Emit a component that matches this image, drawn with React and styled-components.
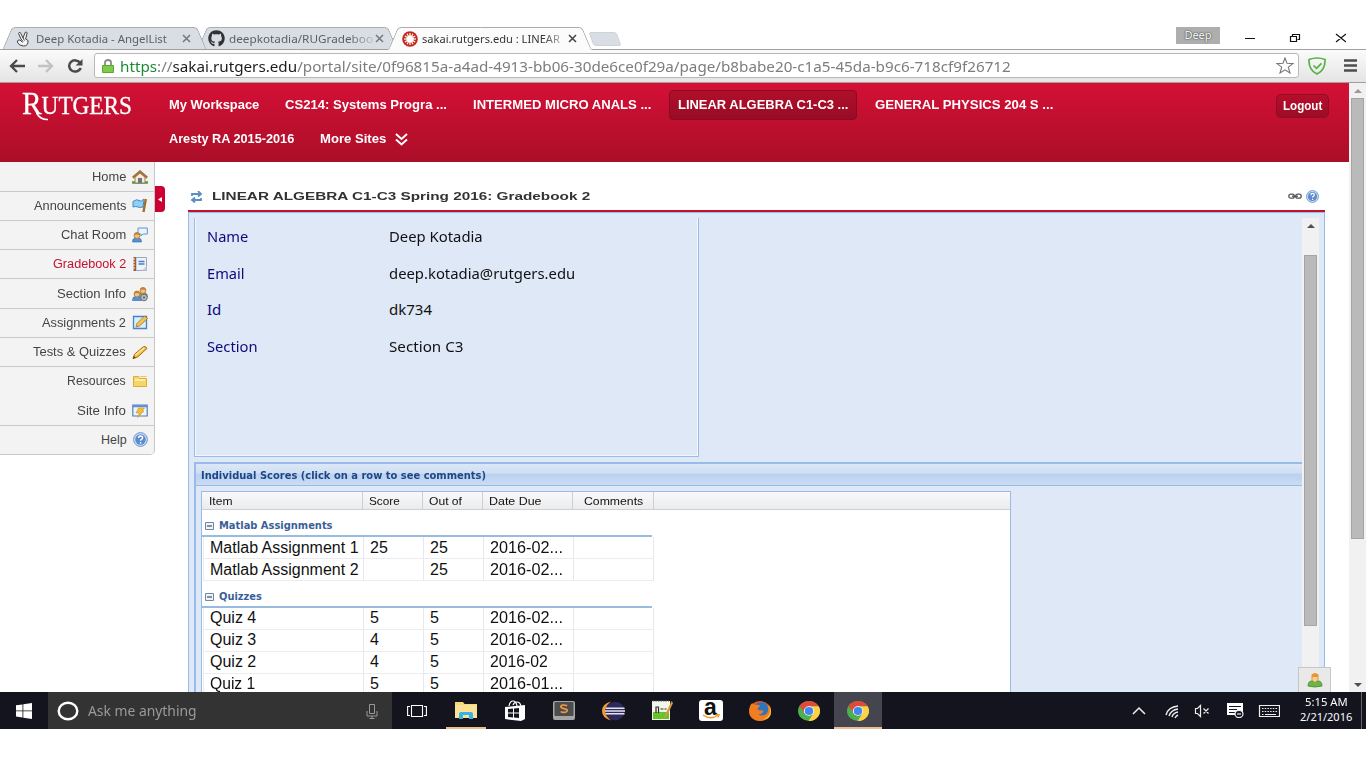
import React, { useLayoutEffect, useRef, useState } from "react";
import styled, { createGlobalStyle, css } from "styled-components";
import { FaGithub } from "react-icons/fa";

const arial = `"Liberation Sans", Arial, sans-serif`;
const segoe = `"Noto Sans", "Open Sans", sans-serif`;
const tahoma = `"DejaVu Sans Condensed", "DejaVu Sans", sans-serif`;

const GlobalStyle = createGlobalStyle`
  * { box-sizing: border-box; }
  body { margin: 0; background: #fff; font-family: ${arial}; }
  svg { display: block; flex: none; }
`;

/* One line of text whose glyphs are scaled to an exact width */
const FitBox = styled.span`
  display: inline-block;
  flex: none;
  white-space: nowrap;
  text-align: left;
`;
const FitInner = styled.span`
  display: inline-block;
  transform-origin: 0 50%;
`;
function Fit({ w, children }) {
  const ref = useRef(null);
  const [scale, setScale] = useState(1);
  useLayoutEffect(() => {
    setScale(w / ref.current.offsetWidth);
  }, [w]);
  return (
    <FitBox style={{ width: w }}>
      <FitInner ref={ref} style={{ transform: `scaleX(${scale})` }}>{children}</FitInner>
    </FitBox>
  );
}

const Screen = styled.div`
  width: 1366px;
  height: 768px;
  padding-top: 27px;
  display: flex;
  flex-direction: column;
  overflow: hidden;
  background: #fff;
`;

/* ---------- Browser tabs ---------- */
const TabStrip = styled.div`
  display: flex;
  height: 23px;
  flex: none;
  padding-left: 7px;
  margin-bottom: -1px;
  position: relative;
  z-index: 2;
`;
const edge = css`
  content: "";
  position: absolute;
  top: 0;
  bottom: 0;
  width: 52%;
  z-index: -1;
  background: ${(p) => (p.$active ? "#fbfbfb" : "#d9dde4")};
  border-top: 1px solid #a9acb0;
  border-bottom: 1px solid ${(p) => (p.$active ? "#fbfbfb" : "#a0a0a0")};
`;
const Tab = styled.div`
  position: relative;
  z-index: ${(p) => p.$z};
  width: ${(p) => p.$w}px;
  padding-left: ${(p) => p.$pad || 9}px;
  display: flex;
  align-items: center;
  font: 11.5px ${segoe};
  line-height: 22px;
  color: ${(p) => (p.$active ? "#333" : "#5d5f63")};
  &::before { ${edge} left: 0; border-left: 1px solid #a0a2a5; border-top-left-radius: 4px; transform: skewX(-23deg); }
  &::after { ${edge} right: 0; border-right: 1px solid #a0a2a5; border-top-right-radius: 4px; transform: skewX(23deg); }
`;
const TabTitle = styled.span`
  margin-left: ${(p) => (p.$fade ? 4 : 6)}px;
  flex: 1;
  overflow: hidden;
  height: 22px;
  mask-image: ${(p) => (p.$fade ? "linear-gradient(90deg, #000 82%, transparent 103%)" : "none")};
`;
const TabClose = styled.span`
  width: 9px;
  margin-right: ${(p) => p.$r || 10}px;
`;
const NewTab = styled.div`
  width: 28px;
  height: 14px;
  margin: 5px 0 0 4px;
  background: #d9dde4;
  border: 1px solid #cfd2d8;
  border-radius: 3px;
  transform: skewX(20deg);
`;
const WindowControls = styled.div`
  display: flex;
  margin-left: auto;
  padding-right: 20px;
  align-items: flex-start;
`;
const ProfileBadge = styled.span`
  width: 44px;
  height: 17px;
  background: #aeaeae;
  color: #fff;
  font: 11px/16px ${segoe};
  text-align: center;
  text-shadow: 0 0 1px #333, 0 0 2px #444;
`;

/* ---------- Toolbar ---------- */
const Toolbar = styled.div`
  display: flex;
  align-items: center;
  flex: none;
  height: 34px;
  border-top: 1px solid #a0a0a0;
  border-bottom: 1px solid #a59a9c;
  background: linear-gradient(#fbfbfb, #e4e4e4);
  padding: 0 9px 1px;
  gap: 13px;
`;
const Omnibox = styled.div`
  display: flex;
  align-items: center;
  width: 1205px;
  height: 25px;
  margin-left: -2px;
  padding: 0 4px 0 7px;
  background: #fff;
  border: 1px solid #b8b8b8;
  border-radius: 3px;
  font: 15px/22px ${segoe};
  color: #7d7d7d;
  gap: 6px;
  & > svg:last-child { margin-left: auto; }
`;
const Secure = styled.span`color: #1b8a32;`;
const Host = styled.span`color: #1c1c1c;`;
const Shield = styled.svg`margin-left: -4px;`;
const Menu = styled.svg`margin-left: 5px;`;

/* ---------- Viewport ---------- */
const Viewport = styled.div`
  display: flex;
  flex: none;
  height: 609px;
  overflow: hidden;
`;
const Page = styled.div`
  position: relative;
  width: 1349px;
  display: flex;
  flex-direction: column;
`;
const Scroll = styled.div`
  width: 17px;
  flex: none;
  display: flex;
  flex-direction: column;
  align-items: center;
  background: #f1f1f1;
  padding: 6px 0 5px;
`;
const Thumb = styled.div`
  width: 13px;
  height: ${(p) => p.$h}px;
  background: #bababa;
  border: 1px solid #a5a5a5;
  margin: ${(p) => p.$gap}px 0 auto;
`;

const Banner = styled.header`
  display: flex;
  flex: none;
  height: 79px;
  padding: 0 20px 0 22px;
  background: linear-gradient(#d41035, #ab0e28);
  color: #fff;
`;
const Logo = styled.div`
  position: relative;
  width: 122px;
  height: 40px;
  padding-top: 3px;
  font: 24.5px/40px "Liberation Serif", serif;
  -webkit-text-stroke: 0.3px #fff;
`;
const LogoCap = styled.span`
  font-size: 31px;
  line-height: 30px;
`;
const Swash = styled.svg`
  position: absolute;
  left: 14px;
  top: 29px;
`;
const Nav = styled.nav`
  display: flex;
  flex-direction: column;
  flex: 1;
  padding-top: 7px;
`;
const NavRow = styled.div`
  display: flex;
  height: 30px;
  margin-bottom: 4px;
`;
const Site = styled.span`
  display: flex;
  align-items: center;
  gap: 9px;
  padding: 0 8px;
  margin-left: ${(p) => p.$gap}px;
  font: bold 12.5px/28px ${arial};
  border: 1px solid ${(p) => (p.$on ? "#8a0a22" : "transparent")};
  border-radius: 4px;
  background: ${(p) => (p.$on ? "linear-gradient(#b10e2b, #980c25)" : "none")};
`;
const Logout = styled.span`
  width: 53px;
  height: 24px;
  margin-top: 11px;
  border: 1px solid #930b24;
  border-radius: 5px;
  background: linear-gradient(#b60e2c, #9c0c26);
  font: bold 12.5px/23px ${arial};
  text-align: center;
`;

const Body = styled.div`
  display: flex;
  flex: 1;
  min-height: 0;
`;
const Side = styled.aside`
  width: 155px;
  height: 293px;
  padding-top: 0.4px;
  border-right: 1px solid #c6c6c6;
  border-bottom-right-radius: 5px;
  background: #f3f3f3;
  overflow: hidden;
`;
const SideItem = styled.div`
  height: 29.25px;
  display: flex;
  justify-content: flex-end;
  align-items: center;
  gap: 6px;
  padding-right: 6px;
  border-bottom: 1px solid ${(p) => (p.$open ? "transparent" : "#c9c9c9")};
  font: 12.5px/28px ${arial};
  color: ${(p) => (p.$on ? "#c8102e" : "#444")};
`;
const Handle = styled.div`
  width: 10px;
  height: 26px;
  margin-top: 24px;
  display: flex;
  align-items: center;
  justify-content: center;
  background: #cc0033;
  border-radius: 0 4px 4px 0;
`;

const Portlet = styled.main`
  width: 1137px;
  margin-left: 23px;
  display: flex;
  flex-direction: column;
`;
const PortletTitle = styled.div`
  height: 50px;
  flex: none;
  display: flex;
  align-items: flex-end;
  padding: 0 6px 7px 2px;
  border-bottom: 2px solid #c0122f;
  font: bold 11.5px/13px ${arial};
  color: #333;
  gap: 9px;
  & > svg:nth-of-type(2) { margin: 0 -5px 3px auto; }
`;
const Frame = styled.section`
  flex: 1;
  min-height: 0;
  display: flex;
  padding: 5px 5px 0 5px;
  border: solid #99bbe8;
  border-width: 1px 1px 0;
  background: #dfe8f6;
`;
const Content = styled.div`
  flex: 1;
  min-width: 0;
  display: flex;
  flex-direction: column;
`;
const Info = styled.div`
  width: 505px;
  height: 239px;
  flex: none;
  padding: 0 0 0 12px;
  border: solid #99bbe8;
  border-width: 0 1px 1px;
  box-shadow: inset 1px 0 #f4f8fd, inset -1px -1px #f4f8fd;
`;
const InfoRow = styled.div`
  display: flex;
  height: 36.5px;
  align-items: center;
  font: 15px/20px ${segoe};
  color: #111;
`;
const InfoLabel = styled.span`
  width: 182px;
  color: #0a0a7c;
`;
const Scores = styled.div`
  flex: 1;
  min-height: 0;
  margin-top: 5px;
  border-top: 2px solid #99bbe8;
  border-left: 2px solid #99bbe8;
`;
const ScoresTitle = styled.div`
  height: 22px;
  padding-left: 5px;
  border-bottom: 1px solid #99bbe8;
  background: linear-gradient(#dce8f6 0, #cddef3 45%, #b9d0ee 46%, #cbdcf3 100%);
  font: bold 11px/24px ${tahoma};
  color: #1f4687;
`;
const Grid = styled.div`
  width: 810px;
  height: 210px;
  margin: 5px 0 0 5px;
  border: 1px solid #99bbe8;
  background: #fff;
`;
const GridHead = styled.div`
  display: flex;
  height: 18px;
  padding-left: 1px;
  background: linear-gradient(#f9f9f9, #ebecee);
  border-bottom: 1px solid #d0d0d0;
  font: 11px/18px ${arial};
  color: #111;
`;
const HeadCell = styled.span`
  width: ${(p) => p.$w}px;
  padding-left: ${(p) => p.$pad || 6}px;
  border-right: 1px solid #cfcfd2;
`;
const Group = styled.div`
  display: flex;
  align-items: flex-end;
  height: 27px;
  width: 450px;
  padding: 0 0 2px 3px;
  gap: 5px;
  border-bottom: 2px solid #99bbe0;
  font: bold 11px/14px ${tahoma};
  color: #3a5f98;
  & > svg { margin-bottom: 3px; }
`;
const Row = styled.div`
  display: flex;
  height: 22px;
  width: 451px;
  margin-left: 1px;
  border: solid #ececf0;
  border-width: 0 0 1px 1px;
  font: 16px/${(p) => p.$lh}px ${arial};
  color: #111;
`;
const Cell = styled.span`
  width: ${(p) => p.$w}px;
  flex: none;
  padding-left: 6px;
  border-right: 1px solid #e6e8f0;
  overflow: hidden;
`;
const Presence = styled.div`
  position: absolute;
  right: 18px;
  bottom: 0;
  width: 33px;
  height: 25px;
  display: flex;
  justify-content: center;
  padding-top: 5px;
  border: 1px solid #c6c6c6;
  border-bottom: 0;
  background: #e9e9e9;
`;

/* ---------- Taskbar ---------- */
const Taskbar = styled.footer`
  display: flex;
  flex: none;
  height: 37px;
  background: #14141f;
  color: #fff;
`;
const Start = styled.div`
  width: 48px;
  display: grid;
  place-items: center;
`;
const Search = styled.div`
  width: 344px;
  display: flex;
  align-items: center;
  padding: 0 14px 0 9px;
  gap: 9px;
  background: #333;
  color: #9a9a9a;
  font: 14px/37px ${segoe};
  & > svg:last-child { margin-left: auto; }
`;
const TaskButton = styled.div`
  width: ${(p) => p.$w || 49}px;
  display: grid;
  place-items: center;
  background: ${(p) => (p.$on ? "#45454f" : "none")};
`;
const TaskInner = styled.div`
  width: ${(p) => p.$line}px;
  height: 37px;
  display: grid;
  place-items: center;
  border-top: 2px solid transparent;
  border-bottom: 2px solid #e9bd92;
`;
const Tray = styled.div`
  display: flex;
  align-items: center;
  margin-left: auto;
  padding-right: 4px;
`;
const Clock = styled.div`
  display: flex;
  flex-direction: column;
  align-items: center;
  width: 70px;
  margin-left: 11px;
  padding-bottom: 3px;
  font: 11px/15px ${segoe};
`;
const ShowDesktop = styled.i`
  width: 1px;
  height: 37px;
  background: #666;
`;

/* ---------- Drawings ---------- */
const CloseX = ({ c }) => (
  <svg width="9" height="9" viewBox="0 0 9 9" stroke={c} strokeWidth="1.5"><path d="M1 1l7 7M8 1L1 8" /></svg>
);
const Peace = () => (
  <svg width="14" height="16" viewBox="0 0 14 16" fill="#f4f4f4" stroke="#444" strokeWidth="1" strokeLinejoin="round">
    <path d="M5 8L2.500 2.500Q3 .8 4.400 1.600L7 7 9.200 1.300Q11 .6 11.200 2L9.600 8 12 9.500Q12.500 15 7.500 15 3 15 1.200 11L2 9.200 4 9 6.500 11.400M5 8l2.200 2.700M7 7l1.500 2.500" />
  </svg>
);
const RutgersDot = () => (
  <svg width="16" height="16" viewBox="0 0 16 16">
    <circle cx="8" cy="8" r="7.800" fill="#c2281d" />
    <g stroke="#fff" strokeWidth="1.200">
      {[0, 30, 60, 90, 120, 150].map((a) => <path key={a} d="M8 2v12" transform={`rotate(${a} 8 8)`} />)}
    </g>
    <circle cx="8" cy="8" r="3.500" fill="#fff" />
  </svg>
);
const House = () => (
  <svg width="16" height="14" viewBox="0 0 16 14">
    <path d="M0 12.500h16" stroke="#5a9b3c" strokeWidth="2.600" />
    <path d="M3 7l5-4 5 4v6H3z" fill="#f3ead8" stroke="#8a6a48" strokeWidth=".8" />
    <path d="M.8 7.800L8 1.600l7.200 6.200" fill="none" stroke="#a0753f" strokeWidth="2.600" />
    <path d="M6 8h4v5H6z" fill="#6a7786" />
  </svg>
);
const Flag = () => (
  <svg width="16" height="15" viewBox="0 0 16 15">
    <path d="M1 3.500q4-3 6-1t5-1.500l-1 8q-3 1-5 0t-5 0z" fill="#8fd0f5" stroke="#4389c2" />
    <path d="M13.800 1L11.500 14" stroke="#a0712c" strokeWidth="2.400" />
  </svg>
);
const Person = ({ x = 0, y = 0, hair = "#c27f35", body = "#4f94d8" }) => (
  <g transform={`translate(${x} ${y})`}>
    <path d="M0 10q0-4 3-4h3q3 0 3 4z" fill={body} stroke="#2e67a8" strokeWidth=".6" />
    <circle cx="4.500" cy="3.600" r="2.900" fill="#f0c08c" stroke={hair} strokeWidth="1" />
    <path d="M1.600 3.300q0-3 2.900-3t2.900 3q-3-1.600-5.800 0z" fill={hair} />
  </g>
);
const Chat = () => (
  <svg width="16" height="16" viewBox="0 0 16 16">
    <path d="M6 1h9.300v6H11L9 9V7H6z" fill="#eaf4fd" stroke="#5d97cf" />
    <Person x={0.5} y={5} />
  </svg>
);
const Book = () => (
  <svg width="16" height="16" viewBox="0 0 16 16">
    <path d="M4 1.500h10.500v13H4z" fill="#eef3fa" stroke="#9aa7b8" />
    <path d="M1.500 1H4v14H1.500z" fill="#a35a35" />
    <path d="M1 3h2M1 6h2M1 9h2M1 12h2" stroke="#eee" />
    <path d="M6.500 5.500h6M6.500 8h6" stroke="#4a7fc8" strokeWidth="1.400" />
    <path d="M10 14.500h4.500V10z" fill="#c5cedb" />
  </svg>
);
const People = () => (
  <svg width="16" height="16" viewBox="0 0 16 16">
    <Person x={6.5} y={1} body="#7fae55" />
    <Person x={0.5} y={4.5} />
    <circle cx="12" cy="11.500" r="3.300" fill="#b9bdc0" stroke="#6b7074" />
    <circle cx="12" cy="11.500" r="1" fill="#555" />
  </svg>
);
const Compose = () => (
  <svg width="16" height="15" viewBox="0 0 16 15">
    <path d="M1.500 1.500h13v12h-13z" fill="#d9eefb" stroke="#4684c4" strokeWidth="1.300" />
    <path d="M4 12l1-3.500L12.500 1l3 2.500L7.500 11z" fill="#f4c256" stroke="#9d702c" strokeWidth=".8" />
  </svg>
);
const Pencil = () => (
  <svg width="16" height="15" viewBox="0 0 16 15">
    <path d="M1 13.700l1.500-4.500L11.500 1.600Q14 .8 15 3.400L6 11.800z" fill="#f5be45" stroke="#a8701e" />
    <path d="M3.500 10L12 3" stroke="#fde9a8" strokeWidth="1.300" />
    <path d="M1 13.700l.9-2.600 1.800 1.700z" fill="#5b3a14" />
  </svg>
);
const Folder = () => (
  <svg width="16" height="12" viewBox="0 0 16 12">
    <path d="M1.500 1.500h5l1 2h7v8h-13z" fill="#f6d766" stroke="#dcae34" />
    <path d="M3 5h10" stroke="#fff6c8" strokeWidth="1.400" />
    <path d="M8 1.500h6.500" stroke="#e9c75c" />
  </svg>
);
const SiteInfo = () => (
  <svg width="16" height="14" viewBox="0 0 16 14">
    <path d="M.8 1h14.400v11H.8z" fill="#eef4fc" stroke="#4f7fbf" strokeWidth="1.200" />
    <path d="M1 2.200h14" stroke="#5b8dd0" strokeWidth="2" />
    <path d="M6.500 4h6L10.200 7H12L5.500 13.500 7.500 9H4z" fill="#f5bd3a" stroke="#cf9326" strokeWidth=".6" />
  </svg>
);
const Help = ({ s = 15 }) => (
  <svg width={s} height={s} viewBox="0 0 15 15">
    <circle cx="7.500" cy="7.500" r="6.900" fill="#c9dcf4" stroke="#6c98d2" />
    <circle cx="7.500" cy="7.500" r="5.200" fill="#5c8ccb" />
    <path d="M5.600 6q0-2 2-2t2 1.800q0 1-1.200 1.600-.8.4-.8 1.300M7.600 10v1.400" fill="none" stroke="#fff" strokeWidth="1.400" />
  </svg>
);
const Arrow = ({ c = "#505050", down }) => (
  <svg width="8" height="4" viewBox="0 0 8 4"><path d={down ? "M0 0h8L4 4z" : "M0 4h8L4 0z"} fill={c} /></svg>
);
const Minus = () => (
  <svg width="9" height="8" viewBox="0 0 9 8">
    <path d="M.5 .5h8v7h-8z" fill="#eef3f9" stroke="#6f86a8" />
    <path d="M2 4h5" stroke="#222b44" />
  </svg>
);
const Chrome = () => (
  <svg width="22" height="20" viewBox="0 0 22 22" preserveAspectRatio="none">
    <circle cx="11" cy="11" r="11" fill="#4caf50" />
    <path d="M1.500 5.500A11 11 0 0 1 20.500 5.500L11 6.200 6.700 13.500z" fill="#dd4b39" />
    <path d="M20.600 5.700A11 11 0 0 1 10.600 22L15.500 13.500 11 6z" fill="#ffd042" />
    <circle cx="11" cy="11" r="5.200" fill="#fff" />
    <circle cx="11" cy="11" r="4.300" fill="#4285f4" />
  </svg>
);
const Explorer = () => (
  <svg width="22" height="17" viewBox="0 0 22 17">
    <path d="M0 0h8l1.500 2H22v14H0z" fill="#f5d77c" />
    <path d="M0 3h22v13H0z" fill="#fae397" />
    <path d="M4 17v-5q0-2 2-2h10q2 0 2 2v5h-4v-4H8v4z" fill="#38b3e6" />
  </svg>
);
const Store = () => (
  <svg width="22" height="21" viewBox="0 0 22 21">
    <path d="M5 6Q6 1 9 1t4 5M9 5q1-3 4-3t4 4" fill="none" stroke="#fff" strokeWidth="1.200" />
    <path d="M1 7l20-2v14l-4 2-16-2z" fill="#fff" />
    <path d="M4 9l5-.4v4H4zM10 8.500l5-.5v4.600h-5zM4 13.600h5v3.800l-5-.3zM10 13.600h5v4.400l-5-.5z" fill="#14141f" />
  </svg>
);
const Sublime = () => (
  <svg width="22" height="19" viewBox="0 0 22 19">
    <rect width="22" height="19" rx="2" fill="#a5a5a5" />
    <rect x="1.500" y="1" width="19" height="14" rx="1" fill="#4c4c4c" />
    <path d="M14.200 4.600Q8 3 7.800 5.600q0 1.400 3.200 2t3.200 2q-.6 2.700-6.600 1.200" fill="none" stroke="#f09a43" strokeWidth="1.700" />
  </svg>
);
const Eclipse = () => (
  <svg width="24" height="20" viewBox="0 0 24 20">
    <path d="M10 .6Q1 3 1 10t9 9.400Q4.500 15 4.500 10T10 .6z" fill="#f39a2e" />
    <ellipse cx="14" cy="10" rx="9.800" ry="9.300" fill="#2f2a5c" />
    <path d="M4.500 7.200h19M4 10h20M4.500 12.800h19" stroke="#e6e4f2" strokeWidth="1.400" />
  </svg>
);
const NotepadPP = () => (
  <svg width="22" height="21" viewBox="0 0 22 21">
    <path d="M1 1h18v19H1z" fill="#f2f5ea" />
    <path d="M2 12h16v7H2z" fill="#67c52b" />
    <path d="M2 1.200h16" stroke="#888" strokeDasharray="1.500 1" />
    <path d="M5 13V7h2.500v6M9.500 9h3M13.500 9h2" fill="none" stroke="#2b2f2b" strokeWidth="1.200" />
    <path d="M20.500 1L14 15l-1 3 3-2L22 3z" fill="#d29a3e" />
  </svg>
);
const AmazonTile = styled.div`
  width: 24px;
  height: 21px;
  border-radius: 3px;
  background: #fff;
  display: flex;
  flex-direction: column;
  align-items: center;
  color: #111;
  font: bold 23px/14px ${arial};
`;
const Firefox = () => (
  <svg width="22" height="20" viewBox="0 0 22 20">
    <ellipse cx="11" cy="10" rx="11" ry="10" fill="#e0591c" />
    <ellipse cx="12.200" cy="8.200" rx="7.600" ry="7" fill="#2f74bd" />
    <path d="M1 5Q3 1 4 3l4 1q3-.5 3 1L8.500 7.200q0 2 2.500 2.300 2.500-.6 3.500.6-1.500 3.600-5.300 3.200 5 3 9-1.300 2-4-.2-8.600Q22 6 22 10q0 9-11 10Q0 19.500.2 10z" fill="#f07d1f" />
    <path d="M19 3q4 6 .5 11.500-2 3-5.500 4 8 .2 8-8.500Q22 6 19 3z" fill="#fcc431" />
  </svg>
);

const sideItems = [
  ["Home", 34, House], ["Announcements", 92, Flag], ["Chat Room", 65, Chat], ["Gradebook 2", 73, Book],
  ["Section Info", 69, People], ["Assignments 2", 84, Compose], ["Tests & Quizzes", 93, Pencil],
  ["Resources", 59, Folder], ["Site Info", 49, SiteInfo], ["Help", 26, Help],
];
const info = [
  ["Name", 41, "Deep Kotadia", 94], ["Email", 38, "deep.kotadia@rutgers.edu", 186],
  ["Id", 14, "dk734", 43], ["Section", 51, "Section C3", 75],
];
const cols = [160, 60, 60, 90, 81];
const matlab = [["Matlab Assignment 1", 149, "25", "25", "2016-02..."], ["Matlab Assignment 2", 149, "", "25", "2016-02..."]];
const quizzes = [["Quiz 4", 46, "5", "5", "2016-02..."], ["Quiz 3", 46, "4", "5", "2016-02..."], ["Quiz 2", 46, "4", "5", "2016-02"], ["Quiz 1", 45, "5", "5", "2016-01..."]];

const ScoreRow = ({ data: [name, w, score, out, due], lh }) => (
  <Row $lh={lh}>
    <Cell $w={160}><Fit w={w}>{name}</Fit></Cell>
    <Cell $w={60}>{score}</Cell>
    <Cell $w={60}>{out}</Cell>
    <Cell $w={90}><Fit w={due.length > 7 ? 73 : 58}>{due}</Fit></Cell>
    <Cell $w={80} />
  </Row>
);

export default function App() {
  return (
    <Screen>
      <GlobalStyle />
      <TabStrip>
        <Tab $w={195} $z={2}>
          <Peace /><TabTitle><Fit w={131}>Deep Kotadia - AngelList</Fit></TabTitle><TabClose $r={11}><CloseX c="#777" /></TabClose>
        </Tab>
        <Tab $w={191} $z={1} $pad={6}>
          <FaGithub size={17} color="#333" /><TabTitle $fade><Fit w={144}>deepkotadia/RUGradeboo</Fit></TabTitle><TabClose $r={9}><CloseX c="#777" /></TabClose>
        </Tab>
        <Tab $w={194} $z={3} $active>
          <RutgersDot /><TabTitle $fade><Fit w={138}>sakai.rutgers.edu : LINEAR</Fit></TabTitle><TabClose><CloseX c="#444" /></TabClose>
        </Tab>
        <NewTab />
        <WindowControls>
          <ProfileBadge>Deep</ProfileBadge>
          <svg width="126" height="22" viewBox="0 0 126 22" fill="none" stroke="#111" strokeWidth="1.200">
            <path d="M25 11.500h10M70.500 9.500h6v5h-6zM72.500 9V7.500h7v5h-2M116 7l10 8M126 7l-10 8" />
          </svg>
        </WindowControls>
      </TabStrip>
      <Toolbar>
        <svg width="16" height="14" viewBox="0 0 16 14" fill="none" stroke="#4a4a4a" strokeWidth="2.300"><path d="M8 1L2 7l6 6M2 7h14" /></svg>
        <svg width="16" height="14" viewBox="0 0 16 14" fill="none" stroke="#c2c2c2" strokeWidth="2.300"><path d="M8 1l6 6-6 6M14 7H0" /></svg>
        <svg width="16" height="14" viewBox="0 0 16 14"><path d="M13 3.600A6 5.600 0 1 0 13.800 9" fill="none" stroke="#4a4a4a" strokeWidth="2.500" /><path d="M15.500 0v6.500H8.500z" fill="#4a4a4a" /></svg>
        <Omnibox>
          <svg width="12" height="14" viewBox="0 0 12 14"><path d="M3 7V3.500q0-2.500 3-2.500t3 2.500V7" fill="none" stroke="#8b8b8b" strokeWidth="1.800" /><path d="M.5 6.500h11V13.500H.5z" fill="#7ccb4b" stroke="#58a832" /></svg>
          <Fit w={891}><Secure>https</Secure>://<Host>sakai.rutgers.edu</Host>/portal/site/0f96815a-a4ad-4913-bb06-30de6ce0f29a/page/b8babe20-c1a5-45da-b9c6-718cf9f26712</Fit>
          <svg width="18" height="17" viewBox="0 0 18 17" fill="#fff" stroke="#777" strokeWidth="1.100"><path d="M9 1l2 5.300 6 .3-4.700 3.500L14 16l-5-3.200L4 16l1.700-5.900L1 6.600l6-.3z" /></svg>
        </Omnibox>
        <Shield width="18" height="18" viewBox="0 0 18 18" fill="none" stroke="#57b244" strokeWidth="1.700"><path d="M1 2.500Q9-.5 17 2.500 17.500 13 9 17 .5 13 1 2.500z" /><path d="M5.500 8.500l3 2.800 5-5" /></Shield>
        <Menu width="13" height="13" viewBox="0 0 13 13" stroke="#4d4d4d" strokeWidth="2.400"><path d="M0 1.500h13M0 6.500h13M0 11.500h13" /></Menu>
      </Toolbar>

      <Viewport>
        <Page>
          <Banner>
            <Logo>
              <Fit w={110}><LogoCap>R</LogoCap>UTGERS</Fit>
              <Swash width="15" height="10" viewBox="0 0 15 10" fill="none" stroke="#fff" strokeWidth="1.600"><path d="M0 0q4 8 12 7.500" /></Swash>
            </Logo>
            <Nav>
              <NavRow>
                <Site $gap={16}><Fit w={90}>My Workspace</Fit></Site>
                <Site $gap={8}><Fit w={162}>CS214: Systems Progra ...</Fit></Site>
                <Site $gap={8}><Fit w={178}>INTERMED MICRO ANALS ...</Fit></Site>
                <Site $gap={9} $on><Fit w={170}>LINEAR ALGEBRA C1-C3 ...</Fit></Site>
                <Site $gap={9}><Fit w={178}>GENERAL PHYSICS 204 S ...</Fit></Site>
              </NavRow>
              <NavRow>
                <Site $gap={16}><Fit w={125}>Aresty RA 2015-2016</Fit></Site>
                <Site $gap={8}>
                  <Fit w={66}>More Sites</Fit>
                  <svg width="13" height="13" viewBox="0 0 13 13" fill="none" stroke="#fff" strokeWidth="2"><path d="M1 1l5.500 5L12 1M1 6.500l5.500 5 5.500-5" /></svg>
                </Site>
              </NavRow>
            </Nav>
            <Logout><Fit w={39}>Logout</Fit></Logout>
          </Banner>
          <Body>
            <Side>
              {sideItems.map(([name, w, Icon]) => (
                <SideItem key={name} $on={name === "Gradebook 2"} $open={name === "Resources"}>
                  <Fit w={w}>{name}</Fit><Icon />
                </SideItem>
              ))}
            </Side>
            <Handle><svg width="4" height="5" viewBox="0 0 4 5"><path d="M4 0v5L0 2.500z" fill="#fff" /></svg></Handle>
            <Portlet>
              <PortletTitle>
                <svg width="13" height="12" viewBox="0 0 13 12" fill="none" stroke="#5a8fc4" strokeWidth="1.800"><path d="M2 5V3h8M8 0l3 3-3 2.500M11 7v2H3M5 6.500L2 9l3 2.500" /></svg>
                <Fit w={378}>LINEAR ALGEBRA C1-C3 Spring 2016: Gradebook 2</Fit>
                <svg width="14" height="7" viewBox="0 0 14 7" fill="none" stroke="#555" strokeWidth="1.300"><rect x=".8" y="1.200" width="5.500" height="4" rx="2" /><rect x="7.700" y="1.200" width="5.500" height="4" rx="2" /><path d="M4 3.200h6" /></svg>
                <Help s={13} />
              </PortletTitle>
              <Frame>
                <Content>
                  <Info>
                    {info.map(([k, kw, v, vw]) => (
                      <InfoRow key={k}><InfoLabel><Fit w={kw}>{k}</Fit></InfoLabel><Fit w={vw}>{v}</Fit></InfoRow>
                    ))}
                  </Info>
                  <Scores>
                    <ScoresTitle><Fit w={285}>Individual Scores (click on a row to see comments)</Fit></ScoresTitle>
                    <Grid>
                      <GridHead>
                        <HeadCell $w={cols[0]}><Fit w={23}>Item</Fit></HeadCell>
                        <HeadCell $w={cols[1]}><Fit w={31}>Score</Fit></HeadCell>
                        <HeadCell $w={cols[2]}><Fit w={33}>Out of</Fit></HeadCell>
                        <HeadCell $w={cols[3]}><Fit w={52}>Date Due</Fit></HeadCell>
                        <HeadCell $w={cols[4]} $pad={11}><Fit w={59}>Comments</Fit></HeadCell>
                      </GridHead>
                      <Group><Minus /><Fit w={114}>Matlab Assignments</Fit></Group>
                      {matlab.map((r) => <ScoreRow key={r[0]} data={r} lh={21} />)}
                      <Group><Minus /><Fit w={43}>Quizzes</Fit></Group>
                      {quizzes.map((r) => <ScoreRow key={r[0]} data={r} lh={19} />)}
                    </Grid>
                  </Scores>
                </Content>
                <Scroll><Arrow /><Thumb $h={371} $gap={27} /></Scroll>
              </Frame>
            </Portlet>
          </Body>
          <Presence>
            <svg width="16" height="15" viewBox="0 0 16 15">
              <path d="M1 13q0-5 4-5h6q4 0 4 5-7 2-14 0z" fill="#6fb544" stroke="#3f8a2a" strokeWidth=".8" />
              <path d="M4.500 1.500q3.500-3 7 0V8h-7z" fill="#e8962e" />
              <path d="M5.500 4h5v3q-2.500 4-5 0z" fill="#f7cd9c" />
            </svg>
          </Presence>
        </Page>
        <Scroll><Arrow c="#999" /><Thumb $h={441} $gap={5} /><Arrow down /></Scroll>
      </Viewport>

      <Taskbar>
        <Start><svg width="16" height="16" viewBox="0 0 16 16" fill="#fff"><path d="M0 2.300L6.500 1.400v6.100H0zM7.300 1.300L16 0v7.500H7.300zM0 8.300h6.500v6.100L0 13.500zM7.300 8.300H16V16l-8.700-1.300z" /></svg></Start>
        <Search>
          <svg width="22" height="20" viewBox="0 0 22 20"><ellipse cx="11" cy="10" rx="9.300" ry="8.300" fill="none" stroke="#fff" strokeWidth="2.400" /></svg>
          <Fit w={109}>Ask me anything</Fit>
          <svg width="12" height="16" viewBox="0 0 12 16" fill="none" stroke="#999"><path d="M3.500 1.500h5v9h-5zM1 8v5h10V8M6 13v2.500M3.500 15.500h5" /></svg>
        </Search>
        <TaskButton $w={49}><svg width="20" height="14" viewBox="0 0 20 14" fill="none" stroke="#fff" strokeWidth="1.100"><path d="M4.500 1.500h11v11h-11zM3 2.500H.6v9H3M17 2.500h2.400v9H17" /></svg></TaskButton>
        <TaskButton $w={49}><TaskInner $line={40}><Explorer /></TaskInner></TaskButton>
        <TaskButton><Store /></TaskButton>
        <TaskButton><Sublime /></TaskButton>
        <TaskButton><Eclipse /></TaskButton>
        <TaskButton><NotepadPP /></TaskButton>
        <TaskButton>
          <AmazonTile>a<svg width="18" height="5" viewBox="0 0 18 5" fill="none" stroke="#f19a22" strokeWidth="1.400"><path d="M1 1q8 5.500 15 0M13.500 .6H17L16 3.500" /></svg></AmazonTile>
        </TaskButton>
        <TaskButton><Firefox /></TaskButton>
        <TaskButton $w={50}><Chrome /></TaskButton>
        <TaskButton $w={48} $on><TaskInner $line={48}><Chrome /></TaskInner></TaskButton>
        <Tray>
          <svg width="150" height="18" viewBox="1130 702 150 18" fill="none" stroke="#eee" strokeWidth="1.200">
            <path d="M1133 714l6-6 6 6" strokeWidth="1.500" />
            <path d="M1166 715q2-8 12-9M1169 716q2-6 9-7M1172 717q1-4 6-5M1175 718q1-2 3-3" strokeWidth="1.400" />
            <path d="M1195.500 708.500h2l3-3v11l-3-3h-2zM1203.500 708.500l5 5M1208.500 708.500l-5 5" />
            <path d="M1227 703h16v12h-16z" fill="#fff" stroke="none" />
            <path d="M1229 706.500h12M1229 709.500h8M1229 712.500h6" stroke="#14141f" />
            <ellipse cx="1239" cy="714" rx="4" ry="3.500" fill="#14141f" /><path d="M1237 714h4" />
            <path d="M1259.500 705.500h20v11h-20z" />
            <path d="M1262 708.500h16M1262 711.500h16" strokeDasharray="1.500 1.200" /><path d="M1262 714.500h1.500M1265 714.500h11" />
          </svg>
          <Clock><Fit w={43}>5:15 AM</Fit><Fit w={52}>2/21/2016</Fit></Clock>
          <ShowDesktop />
        </Tray>
      </Taskbar>
    </Screen>
  );
}
